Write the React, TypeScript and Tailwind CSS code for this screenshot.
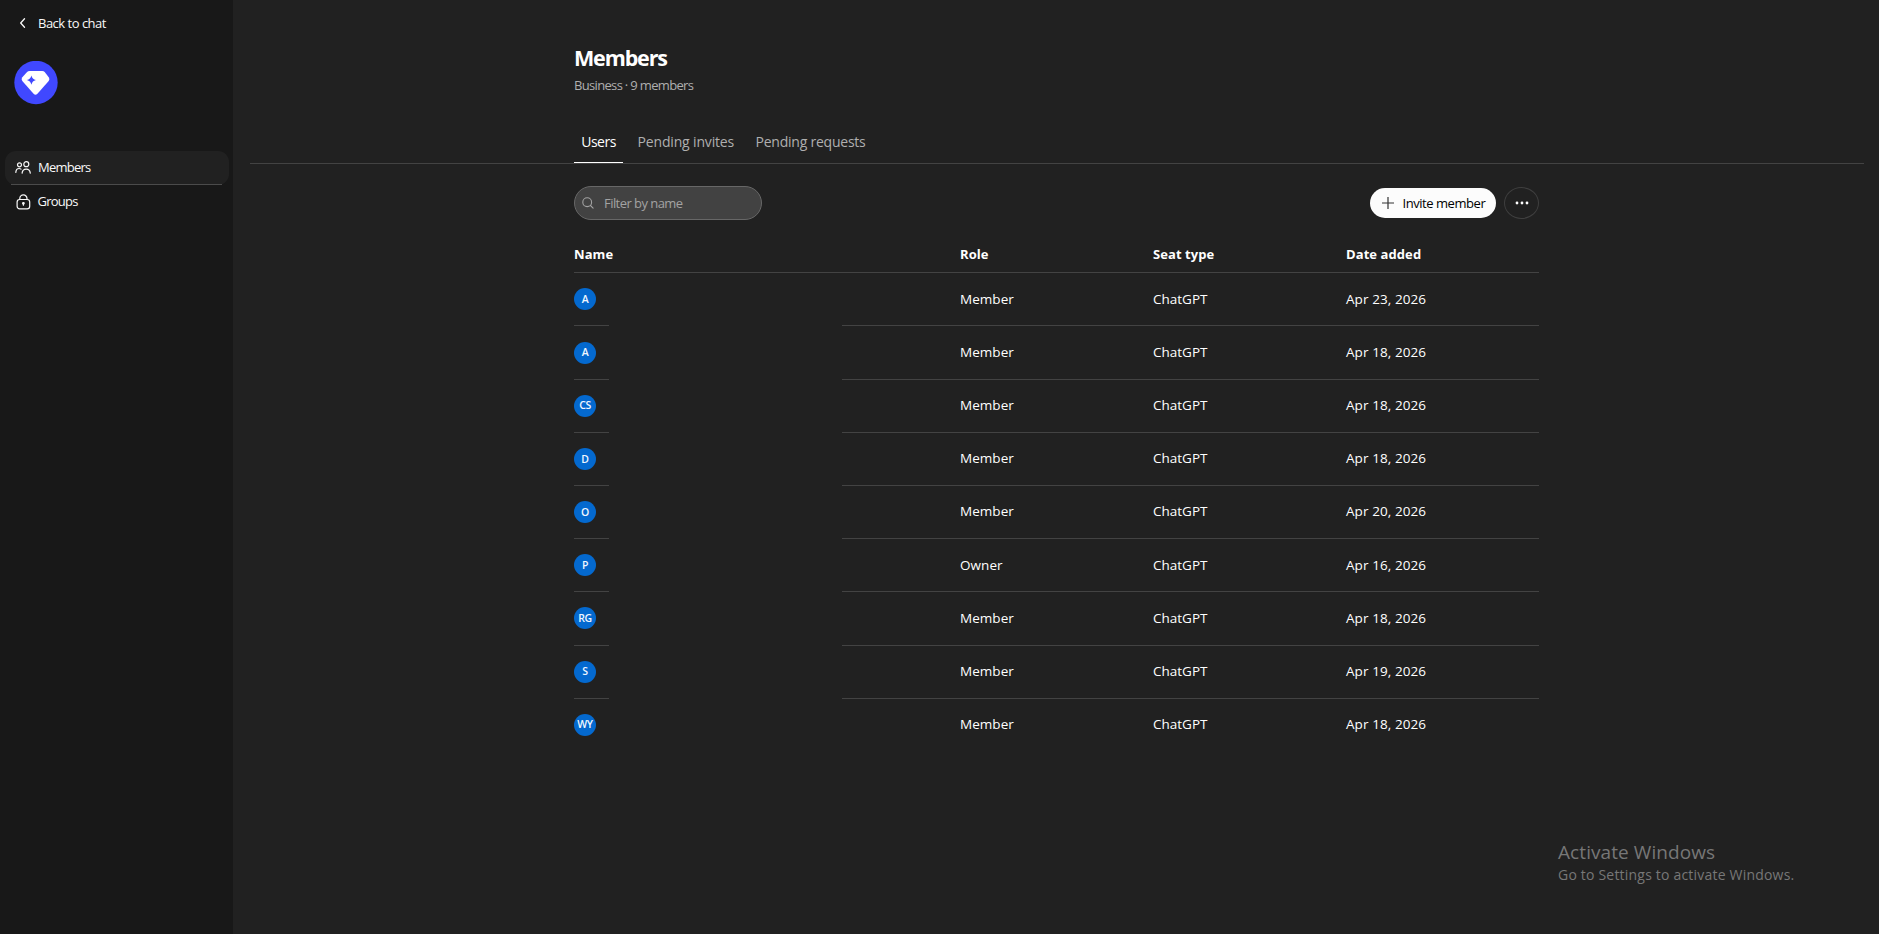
import type { FC } from "react";

interface Member {
  initials: string;
  role: string;
  date: string;
}

const members: Member[] = [
  { initials: "A", role: "Member", date: "Apr 23, 2026" },
  { initials: "A", role: "Member", date: "Apr 18, 2026" },
  { initials: "CS", role: "Member", date: "Apr 18, 2026" },
  { initials: "D", role: "Member", date: "Apr 18, 2026" },
  { initials: "O", role: "Member", date: "Apr 20, 2026" },
  { initials: "P", role: "Owner", date: "Apr 16, 2026" },
  { initials: "RG", role: "Member", date: "Apr 18, 2026" },
  { initials: "S", role: "Member", date: "Apr 19, 2026" },
  { initials: "WY", role: "Member", date: "Apr 18, 2026" },
];

const Sidebar: FC = () => (
  <aside className="flex w-[233px] shrink-0 flex-col bg-[#181818] text-[13px] text-[#f8f8f8]">
    <a className="flex h-[46px] items-center pl-[19px]">
      <svg width="9" height="10" viewBox="0 0 9 10" fill="none" stroke="currentColor" strokeWidth="1.3" strokeLinecap="round" strokeLinejoin="round">
        <path d="M5.5 .8 1.7 5 5.5 9.2" />
      </svg>
      <span className="ml-[10px] pt-[2px] tracking-[-0.5px]">Back to chat</span>
    </a>

    <svg className="mt-[15px] ml-3.5" width="44" height="44" viewBox="0 0 44 44">
      <circle cx="22" cy="21.5" r="21.7" fill="#4048ff" />
      <path
        d="M15.5 9.900h12.800q1.400 0 2.400 1l4.200 5.600q1.100 1.800-.2 3.400L23.200 33q-1.700 1.600-3.400 0L8.300 19.900q-1.300-1.600-.2-3.400l5-5.600q1-1 2.400-1Z"
        fill="#fff"
      />
      <path d="M17.400 14.500q.9 3.700 4.500 4.600-3.600.9-4.500 4.600-.9-3.700-4.500-4.600 3.600-.9 4.500-4.600Z" fill="#4048ff" />
    </svg>

    <nav className="mt-[46px] flex flex-col px-[4.500px] tracking-[-0.750px]">
      <a className="flex h-[34px] flex-col rounded-[11px] bg-[#212121]">
        <span className="flex h-[33px] items-center pl-[10px]">
          <svg width="17" height="14" viewBox="0 0 17 14" fill="none" stroke="currentColor" strokeWidth="1.200" strokeLinecap="round">
            <circle cx="4.500" cy="3.800" r="2" />
            <circle cx="11.300" cy="3.200" r="2.500" />
            <path d="M.8 11.400c.2-2.500 1.500-3.900 3.300-3.900.8 0 1.400.2 1.900.6M7.100 12.100c.3-2.700 2-4 4.100-4s3.800 1.300 4.100 4" />
          </svg>
          <span className="ml-[6.500px]">Members</span>
        </span>
        <span className="mx-[6.500px] h-px bg-[#4b4b4b]" />
      </a>
      <a className="flex h-[34px] items-center pl-[11px]">
        <svg className="mb-[1px]" width="15" height="16" viewBox="0 0 15 16" fill="none" stroke="currentColor" strokeWidth="1.200" strokeLinecap="round">
          <rect x="1.100" y="5.500" width="12.600" height="9.300" rx="2.600" />
          <path d="M3.800 5.400V4.500a3.600 3.600 0 0 1 7.200 0v.9" />
          <circle cx="7.400" cy="9.300" r=".8" fill="currentColor" />
          <path d="M7.400 9.500v1.700" />
        </svg>
        <span className="ml-[7px]">Groups</span>
      </a>
    </nav>
  </aside>
);

const Toolbar: FC = () => (
  <div className="mt-[22px] flex h-[34px] items-center justify-between">
    <div className="flex h-[34px] w-[188px] items-center rounded-full border border-[#676767] bg-[#424242] pl-[7px] text-[13px] tracking-[-0.550px] text-[#a3a3a3]">
      <svg width="12" height="12" viewBox="0 0 12 12" fill="none" stroke="currentColor" strokeWidth="1.100" strokeLinecap="round">
        <circle cx="5.200" cy="5.200" r="4.400" />
        <path d="m8.500 8.500 2.600 2.600" />
      </svg>
      <span className="ml-[10px] pt-[2px]">Filter by name</span>
    </div>
    <div className="flex items-center gap-2">
      <button className="flex h-[30px] w-[126px] items-center rounded-full bg-[#fcfcfc] pl-3 text-[13px] tracking-[-0.450px] text-black">
        <svg width="12" height="12" viewBox="0 0 12 12" stroke="#333" strokeWidth="1.200">
          <path d="M6 0v12M0 6h12" />
        </svg>
        <span className="ml-[8.500px] pt-[2px] font-medium whitespace-nowrap">Invite member</span>
      </button>
      <button className="flex h-8 w-[35px] items-center justify-center rounded-[50%] border border-[#3f3f3f]">
        <svg width="14" height="4" viewBox="0 0 14 4" fill="#fff">
          <circle cx="2" cy="2" r="1.400" />
          <circle cx="7" cy="2" r="1.400" />
          <circle cx="12" cy="2" r="1.400" />
        </svg>
      </button>
    </div>
  </div>
);

const MembersTable: FC = () => (
  <div className="mt-[16.230px] text-[13.500px] text-white">
    <div className="grid h-9 grid-cols-[2fr_1fr_1fr_1fr] items-center pt-[2px] text-[13px] font-bold tracking-[0.080px]">
      <span>Name</span>
      <span>Role</span>
      <span>Seat type</span>
      <span>Date added</span>
    </div>
    <div className="h-px bg-[#434343]" />
    {members.map((member, i) => (
      <div key={i}>
        <div className="grid h-[52.190px] grid-cols-[2fr_1fr_1fr_1fr] items-center">
          <span className="flex size-[22px] items-center justify-center rounded-full bg-[#0469cf] pt-[1px] text-[10.500px] font-semibold tracking-[-0.4px] text-[#f0f7ff]">
            {member.initials}
          </span>
          <span className="pb-[1px] tracking-[0.050px]">{member.role}</span>
          <span className="pb-[1px]">ChatGPT</span>
          <span className="pb-[1px] tracking-[0.080px]">{member.date}</span>
        </div>
        {i < members.length - 1 && (
          <div className="flex h-px justify-between">
            <span className="w-[35px] bg-[#434343]" />
            <span className="w-[697px] bg-[#434343]" />
          </div>
        )}
      </div>
    ))}
  </div>
);

export default function App() {
  return (
    <div className="relative flex h-[934px] w-full overflow-hidden bg-[#212121] font-['Open_Sans','Noto_Sans',sans-serif]">
      <Sidebar />

      <main className="flex-1 pr-[15px] pl-[17px]">
        <header className="border-b border-[#434343]">
          <div className="ml-[324px] flex h-[163px] w-[965px] flex-col">
            <h1 className="mt-[42px] text-[21.500px] leading-8 font-bold tracking-[-1.150px] text-white">Members</h1>
            <p className="mt-[1px] text-[13px] leading-5 tracking-[-0.670px] text-[#afafaf]">Business · 9 members</p>
            <div className="mt-auto flex h-[42px] text-[14px] tracking-[-0.230px] text-[#afafaf]">
              <span className="flex w-[49px] justify-center border-b border-white text-white">
                <span className="mt-[10px] tracking-[-0.5px]">Users</span>
              </span>
              <span className="mt-[10px] ml-[14.500px] w-[118px] tracking-[-0.160px]">Pending invites</span>
              <span className="mt-[10px]">Pending requests</span>
            </div>
          </div>
        </header>

        <div className="ml-[324px] w-[965px]">
          <Toolbar />
          <MembersTable />
        </div>
      </main>

      {/* OS watermark floats over the page */}
      <div className="absolute top-[838px] left-[1558px] text-[#777]">
        <p className="pt-[1px] text-[19px] leading-[26px] tracking-[0.080px]">Activate Windows</p>
        <p className="text-[14px] leading-5 tracking-[0.2px]">Go to Settings to activate Windows.</p>
      </div>
    </div>
  );
}
